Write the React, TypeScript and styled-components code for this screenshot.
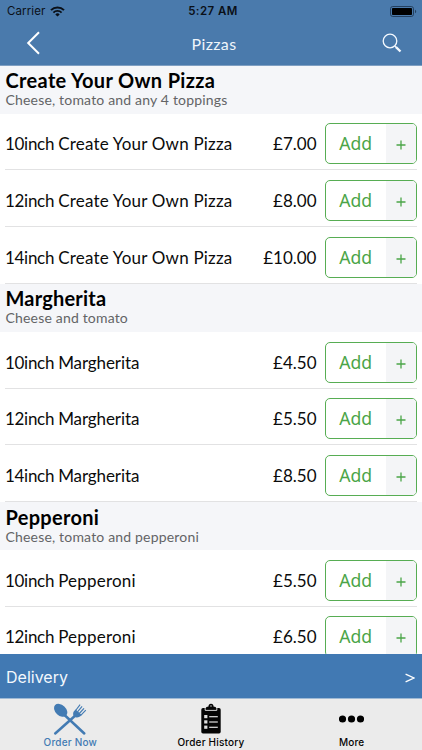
import React from 'react';
import styled, { createGlobalStyle } from 'styled-components';

const Global = createGlobalStyle`
  *, *::before, *::after { box-sizing: border-box; }
  body { margin: 0; background: #fff; }
`;

const Screen = styled.div`
  width: 422px;
  height: 750px;
  display: flex;
  flex-direction: column;
  overflow: hidden;
  background: #fff;
  color: #0b0b0b;
  font-family: Lato, "Open Sans", sans-serif;
  white-space: nowrap;
`;

const Header = styled.header`
  flex: none;
  height: 65.5px;
  background: #4a7aac;
  border-bottom: 1px solid #7f9fc2;
`;

const StatusBar = styled.div`
  height: 22px;
  display: grid;
  grid-template-columns: 1fr auto 1fr;
  align-items: center;
  padding: 0 5px 0 7px;
  font-family: Inter, sans-serif;
  color: #0a1018;
`;

const Carrier = styled.div`
  display: flex;
  align-items: center;
  gap: 5px;
  font-size: 11.5px;
  letter-spacing: 0.1px;
`;

const Clock = styled.div`
  font-size: 11.5px;
  font-weight: 600;
  letter-spacing: 0.45px;
  margin-left: 2px;
`;

const BatterySlot = styled.div`
  display: flex;
  justify-content: flex-end;
`;

const NavBar = styled.div`
  height: 42px;
  display: grid;
  grid-template-columns: 1fr auto 1fr;
  align-items: center;
  padding: 0 20px 0 26px;
`;

const NavTitle = styled.div`
  color: #eff5fb;
  font-size: 16px;
  letter-spacing: 0.35px;
`;

const NavAction = styled.div<{ $end?: boolean }>`
  display: flex;
  justify-content: ${(p) => (p.$end ? 'flex-end' : 'flex-start')};
`;

const Menu = styled.main`
  flex: 1;
  min-height: 0;
  overflow: hidden;
`;

const SectionHead = styled.div`
  height: 48.2px;
  padding: 3.5px 5.5px 0;
  background: #f5f6f9;
`;

const SectionTitle = styled.h2<{ $tracking: number }>`
  margin: 0;
  font-size: 20px;
  line-height: 22px;
  font-weight: 700;
  color: #000;
  letter-spacing: ${(p) => p.$tracking}px;
`;

const SectionNote = styled.div`
  font-size: 14px;
  line-height: 17px;
  color: #636466;
  letter-spacing: 0.18px;
`;

const Row = styled.div`
  height: 56.7px;
  margin: 0 5.5px 0 5px;
  padding-top: 9.6px;
  border-bottom: 1px solid #e2e2e3;
  display: flex;
  align-items: flex-start;
`;

const ItemName = styled.div<{ $tracking: number }>`
  flex: 1;
  font-size: 17px;
  line-height: 41px;
  letter-spacing: ${(p) => p.$tracking}px;
`;

const Size = styled.span`
  letter-spacing: -0.3px;
`;

const Price = styled.div`
  font-size: 17px;
  line-height: 41px;
  margin-right: 8.5px;
`;

const AddButton = styled.button`
  width: 91.5px;
  height: 41px;
  padding: 0;
  display: flex;
  overflow: hidden;
  border: 1.3px solid #57ad53;
  border-radius: 5px;
  background: #fff;
  color: #4ba548;
  font-family: "Noto Sans", sans-serif;
`;

const AddLabel = styled.span`
  flex: 1;
  font-size: 17.6px;
  line-height: 39px;
  text-align: center;
`;

const Plus = styled.span`
  width: 30px;
  height: 100%;
  display: flex;
  align-items: center;
  justify-content: center;
  padding: 3px 0 0 1px;
  background: #f4f5f7;
`;

const DeliveryBar = styled.div`
  flex: none;
  height: 45.4px;
  padding: 0 7px 0 6px;
  display: flex;
  align-items: center;
  justify-content: space-between;
  background: #4179b3;
  border-bottom: 1px solid #9fbad5;
  color: #f3f8fd;
`;

const Mode = styled.span`
  padding-top: 2px;
  font-family: Inter, sans-serif;
  font-size: 16px;
`;

const TabBar = styled.nav`
  flex: none;
  height: 50.6px;
  display: grid;
  grid-template-columns: repeat(3, 1fr);
  background: #ebebeb;
`;

const Tab = styled.div<{ $active?: boolean }>`
  display: flex;
  flex-direction: column;
  align-items: center;
  color: ${(p) => (p.$active ? '#437bb3' : '#050505')};
`;

const TabIcon = styled.div`
  height: 37px;
  padding-top: 4px;
`;

const TabLabel = styled.div`
  font-family: Inter, sans-serif;
  font-size: 10px;
  line-height: 13px;
  font-weight: 500;
  letter-spacing: 0.2px;
`;

const WifiIcon = () => (
  <svg width="15" height="11" viewBox="0 0 15 11" fill="none" stroke="#0a1018">
    <path d="M1 4.1a9.2 9.2 0 0 1 13 0" strokeWidth="2" />
    <path d="M3.4 6.6a5.8 5.8 0 0 1 8.2 0" strokeWidth="1.8" />
    <path d="M7.5 10.6 5.3 8.4a3.1 3.1 0 0 1 4.4 0z" fill="#0a1018" stroke="none" />
  </svg>
);

const BatteryIcon = () => (
  <svg width="27" height="11" viewBox="0 0 27 11">
    <rect x="0.5" y="0.5" width="23" height="10" rx="2.3" fill="none" stroke="#24405f" />
    <rect x="2" y="2" width="20" height="7" rx="0.8" fill="#000" />
    <path d="M25 3.8c1.6.6 1.6 2.8 0 3.4z" fill="#24405f" />
  </svg>
);

const BackIcon = () => (
  <svg width="15" height="24" viewBox="0 0 15 24" fill="none" stroke="#fff" strokeWidth="2">
    <path d="M13 1.3 2.2 12 13 22.7" />
  </svg>
);

const SearchIcon = () => (
  <svg width="20" height="20" viewBox="0 0 20 20" fill="none" stroke="#f4f9ff">
    <circle cx="8" cy="8" r="6.8" strokeWidth="1.3" />
    <path d="m12.8 13 1.5 1.5" strokeWidth="1.3" />
    <path d="m14 14.2 4.5 4.3" strokeWidth="2.3" />
  </svg>
);

const CutleryIcon = () => (
  <svg width="34" height="33" viewBox="0 0 34 33" fill="#437bb3">
    <path d="m11 11.5 20.3 19" stroke="#437bb3" strokeWidth="2.5" strokeLinecap="round" />
    <path d="m23.5 11.5-21.3 19" stroke="#437bb3" strokeWidth="2.5" strokeLinecap="round" />
    <ellipse cx="7.7" cy="7.3" rx="7.6" ry="5.3" transform="rotate(43 7.700 7.300)" />
    <path d="M20.3 9.500c-.7 2.6.7 4.900 3.300 5 2 .1 3.800-1.100 5.100-2.500l-6-5.600c-1.100 1.100-2.100 2-2.400 3.100Z" />
    <path d="m22.600 7.500 4.500-5.900M24.500 8.900l4.600-5.500M26.300 10.500l4.700-5.200M28 12.100l4.800-4.900" stroke="#437bb3" strokeWidth="1.15" />
  </svg>
);

const ClipboardIcon = () => (
  <svg width="20" height="31" viewBox="0 0 20 31">
    <path d="M2 5h16q1.700 0 1.700 1.700v22q0 1.700-1.700 1.700H2Q.3 30.400.3 28.700v-22Q.3 5 2 5Z" fill="#050505" />
    <path d="M4.200 4.300v3h11.600v-3" fill="none" stroke="#ebebeb" strokeWidth="1" />
    <path d="M4.800 6.500v-1.500q0-1.500 2.700-1.500Q7.500.8 10 .8t2.500 2.700q2.700 0 2.700 1.500v1.500Z" fill="#050505" />
    <circle cx="10" cy="3" r="0.7" fill="#ebebeb" />
    {[12, 17.3, 22.6].map((y) => (
      <g key={y} fill="#e0e0e0">
        <rect x="3.2" y={y} width="3.2" height="3.2" />
        <rect x="8.2" y={y + 1.1} width="8.6" height="1.2" />
      </g>
    ))}
  </svg>
);

const MoreIcon = () => (
  <svg width="25" height="32" viewBox="0 0 25 32" fill="#000">
    <circle cx="3.5" cy="16" r="3.6" />
    <circle cx="12.5" cy="16" r="3.6" />
    <circle cx="21.5" cy="16" r="3.6" />
  </svg>
);

const PlusIcon = () => (
  <svg width="10" height="10" viewBox="0 0 10 10" stroke="#4ba548" strokeWidth="1.3">
    <path d="M5 .5v9M.5 5h9" />
  </svg>
);

const ChevronIcon = () => (
  <svg width="10" height="14" viewBox="0 0 10 14" fill="none" stroke="#fff" strokeWidth="1.3">
    <path d="M.6 5.2 8.9 9 .6 12.8" />
  </svg>
);

const sections = [
  {
    title: 'Create Your Own Pizza',
    note: 'Cheese, tomato and any 4 toppings',
    prices: ['£7.00', '£8.00', '£10.00'],
    titleTracking: 0.33,
    itemTracking: 0.2,
  },
  {
    title: 'Margherita',
    note: 'Cheese and tomato',
    prices: ['£4.50', '£5.50', '£8.50'],
    titleTracking: 0.2,
    itemTracking: -0.1,
  },
  {
    title: 'Pepperoni',
    note: 'Cheese, tomato and pepperoni',
    prices: ['£5.50', '£6.50'],
    titleTracking: 0.3,
    itemTracking: 0.2,
  },
];
const sizes = ['10inch', '12inch', '14inch'];

export default function App() {
  return (
    <Screen>
      <Global />
      <Header>
        <StatusBar>
          <Carrier>Carrier <WifiIcon /></Carrier>
          <Clock>5:27 AM</Clock>
          <BatterySlot><BatteryIcon /></BatterySlot>
        </StatusBar>
        <NavBar>
          <NavAction><BackIcon /></NavAction>
          <NavTitle>Pizzas</NavTitle>
          <NavAction $end><SearchIcon /></NavAction>
        </NavBar>
      </Header>
      <Menu>
        {sections.map((s) => (
          <section key={s.title}>
            <SectionHead>
              <SectionTitle $tracking={s.titleTracking}>{s.title}</SectionTitle>
              <SectionNote>{s.note}</SectionNote>
            </SectionHead>
            {s.prices.map((price, i) => (
              <Row key={sizes[i]}>
                <ItemName $tracking={s.itemTracking}>
                  <Size>{sizes[i]} </Size>{s.title}
                </ItemName>
                <Price>{price}</Price>
                <AddButton>
                  <AddLabel>Add</AddLabel>
                  <Plus><PlusIcon /></Plus>
                </AddButton>
              </Row>
            ))}
          </section>
        ))}
      </Menu>
      <DeliveryBar>
        <Mode>Delivery</Mode>
        <ChevronIcon />
      </DeliveryBar>
      <TabBar>
        <Tab $active><TabIcon><CutleryIcon /></TabIcon><TabLabel>Order Now</TabLabel></Tab>
        <Tab><TabIcon><ClipboardIcon /></TabIcon><TabLabel>Order History</TabLabel></Tab>
        <Tab><TabIcon><MoreIcon /></TabIcon><TabLabel>More</TabLabel></Tab>
      </TabBar>
    </Screen>
  );
}
